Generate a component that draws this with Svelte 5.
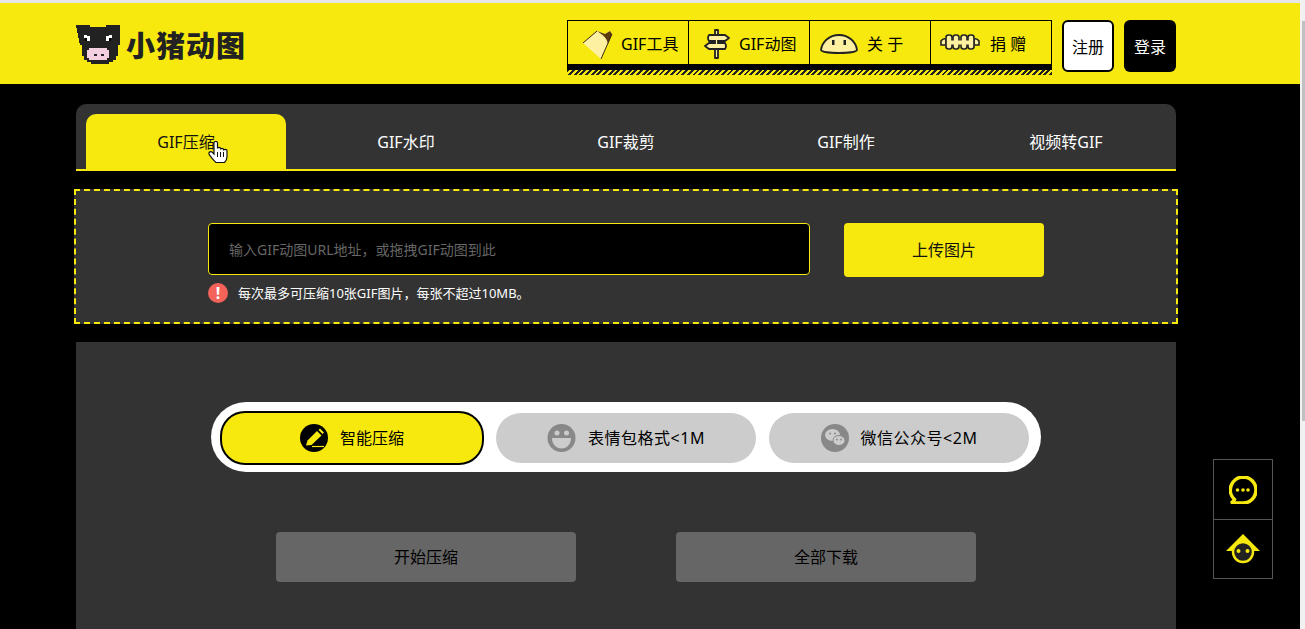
<script>
  const tabs = ['GIF压缩', 'GIF水印', 'GIF裁剪', 'GIF制作', '视频转GIF'];
</script>

<div class="window">
  <div class="page">
    <div class="topline"></div>
    <header>
      <div class="wrap head">
        <div class="logo">
          <svg width="44" height="42" viewBox="0 0 44 42" shape-rendering="crispEdges">
            <path fill="#222" d="M0 1h14v2h16v-2h14v20h-2v11h-2v4h-3v2h-4v2h-18v-2h-4v-2h-3v-4h-2v-11h-2z"/>
            <path fill="#fff" d="M8 11h3v1h3v5h-3v-2h-1v-1h-2zM36 11h-3v1h-3v5h3v-2h1v-1h2z"/>
            <path fill="#000" d="M9 14h2v3h-2zM33 14h2v3h-2z"/>
            <path fill="#f3cfe0" d="M13 24h18v2h2v8h-2v2h-18v-2h-2v-8h2z"/>
            <path fill="#222" d="M18 30h3v2h-3zM25 30h3v2h-3z"/>
          </svg>
          <span class="brand">小猪动图</span>
        </div>
        <div class="right">
          <nav>
            <div class="cells">
              <a class="cell c1" href="#a">
                <svg class="tall" width="32" height="30" viewBox="0 0 32 30"><path d="M2 14 16 2l8 3 5-3 2 3-11 25z" fill="#fdf0a0"/><path d="M16 2l8 3 5-3 2 3-4 10c-1-6-5-9-11-13z" fill="#5b3a12"/><path d="M2 14 16 2" stroke="#3a2a10" fill="none"/><path d="M31 5 20 30" stroke="#3a2a10" fill="none"/></svg>
                <span>GIF工具</span>
              </a>
              <a class="cell c2" href="#a">
                <svg class="tall" width="26" height="30" viewBox="0 0 26 30">
                  <g fill="#fdf0a0" stroke="#222" stroke-width="1.800" stroke-linejoin="round">
                    <path d="M11 1h3v28h-3z"/>
                    <path d="M5 6h16l4 3-4 3H5q-2-3 0-6z"/>
                    <path d="M21 14H5l-4 3 4 3h16q2-3 0-6z"/>
                  </g>
                  <path d="M11.900 11h1.200v5h-1.200z" fill="#fdf0a0"/>
                </svg>
                <span>GIF动图</span>
              </a>
              <a class="cell c3" href="#a">
                <svg class="blob" width="38" height="20" viewBox="0 0 38 20"><path d="M1 16C2 8 9 1 19 1s17 7 18 15c-1 4-35 4-36 0z" fill="#fdf0a0" stroke="#222" stroke-width="1.800"/><path d="M12 6h2.500v5H12zM23.500 6H26v5h-2.500z" fill="#222"/></svg>
                <span class="spaced">关 于</span>
              </a>
              <a class="cell c4" href="#a">
                <svg class="fence" width="40" height="16" viewBox="0 0 40 16">
                  <g stroke="#222" stroke-width="1.600" fill="#fdf0a0">
                    <path d="M1 7q2-3 5-2V11H1z"/>
                    <path d="M39 7q-2-3-5-2V11h5z"/>
                    <rect x="6" y="1" width="6" height="14" rx="2.500"/>
                    <rect x="13" y="1" width="6" height="14" rx="2.500"/>
                    <rect x="21" y="1" width="6" height="14" rx="2.500"/>
                    <rect x="28" y="1" width="6" height="14" rx="2.500"/>
                  </g>
                  <path d="M7 6.500h26v4H7z" fill="#fdf0a0"/>
                </svg>
                <span class="spaced">捐 赠</span>
              </a>
            </div>
            <div class="thick"></div>
            <div class="hatch"></div>
          </nav>
          <button class="auth reg">注册</button>
          <button class="auth login">登录</button>
        </div>
      </div>
    </header>

    <main class="wrap">
      <div class="tabs">
        {#each tabs as t, i}
          <div class="tab" class:active={i === 0}>{t}</div>
        {/each}
        <svg class="cursor" width="20" height="22" viewBox="0 0 20 22"><path d="M6 2c0-2 3.500-2 3.500 0v5.500c0-1.500 3-1.500 3 0v1c0-1.500 3-1.500 3 0v1c0-1.500 3.500-1.500 3.500 0v6c0 3-1.500 5-2.500 6H8c-1.500-1-6.500-7-7-8.500-.5-2 2-3 3-2l2 2z" fill="#fff" stroke="#111" stroke-width="1.200"/><path d="M9.500 11v5M12.500 11v5M15.500 11v5" stroke="#111" stroke-width="1"/></svg>
      </div>

      <section class="upload">
        <div class="row">
          <div class="input">输入GIF动图URL地址，或拖拽GIF动图到此</div>
          <button class="upbtn">上传图片</button>
        </div>
        <div class="note">
          <span class="warn">!</span>
          <span class="notetext">每次最多可压缩10张GIF图片，每张不超过10MB。</span>
        </div>
      </section>

      <section class="panel">
        <div class="pill">
          <div class="opt on">
            <svg width="28" height="28" viewBox="0 0 28 28"><circle cx="14" cy="14" r="14" fill="#000"/><path d="M6 21.500l1.500-5L17 7l4.500 4.500-10 9.500z" fill="#f7e90e"/><path d="M18.500 6l1.500-1.500 4 4L22.500 10z" fill="#f7e90e"/><path d="M12 22.500h12" stroke="#f7e90e" stroke-width="1.200"/></svg>
            <span>智能压缩</span>
          </div>
          <div class="opt">
            <svg width="29" height="28" viewBox="0 0 29 28"><circle cx="14.500" cy="14" r="14" fill="#888"/><circle cx="10" cy="9" r="2.500" fill="#ccc"/><circle cx="19.500" cy="9" r="2.500" fill="#ccc"/><path d="M5 14h19c0 6-4 10.500-9.500 10.500S5 20 5 14z" fill="#ccc"/></svg>
            <span class="wide">表情包格式&lt;1M</span>
          </div>
          <div class="opt">
            <svg width="28" height="28" viewBox="0 0 28 28"><circle cx="14" cy="14" r="14" fill="#888"/><ellipse cx="11.500" cy="11" rx="7.500" ry="6" fill="#ccc"/><ellipse cx="18" cy="16.500" rx="6" ry="5" fill="#ccc" stroke="#888"/><circle cx="9" cy="9.500" r="1" fill="#888"/><circle cx="14" cy="9.500" r="1" fill="#888"/><circle cx="16" cy="15.500" r=".9" fill="#888"/><circle cx="20" cy="15.500" r=".9" fill="#888"/></svg>
            <span class="wide">微信公众号&lt;2M</span>
          </div>
        </div>
        <div class="actions">
          <button class="act">开始压缩</button>
          <button class="act">全部下载</button>
        </div>
      </section>
    </main>

    <aside class="side">
      <div class="sidebtn">
        <svg width="28" height="28" viewBox="0 0 28 28"><path d="M14 1a13 13 0 1 1 0 26H2c2-1 3-2 3.500-3.500A13 13 0 0 1 14 1z" fill="none" stroke="#f7e90e" stroke-width="3.600"/><circle cx="8.500" cy="14" r="1.800" fill="#f7e90e"/><circle cx="14" cy="14" r="1.800" fill="#f7e90e"/><circle cx="19" cy="14" r="1.800" fill="#f7e90e"/></svg>
      </div>
      <div class="sidebtn second">
        <svg width="34" height="30" viewBox="0 0 34 30"><path d="M17 0 34 17H0z" fill="#f7e90e"/><circle cx="17" cy="18" r="10" fill="#222" stroke="#f7e90e" stroke-width="2.400"/><circle cx="12.500" cy="17" r="2" fill="#f7e90e"/><circle cx="21.500" cy="17" r="2" fill="#f7e90e"/></svg>
      </div>
    </aside>
  </div>
  <div class="scrollbar"><div class="thumb"></div></div>
</div>

<style>
  :global(body) { margin: 0; background: #000; }
  .window {
    display: flex; width: 1305px; height: 629px; overflow: hidden;
    font-family: "Noto Sans", "Noto Sans CJK SC", sans-serif; font-size: 16px; color: #fff;
  }
  .page { position: relative; width: 1300px; background: #000; overflow: hidden; }
  .topline { height: 3px; background: #e6e6e6; }
  .scrollbar { width: 5px; background: #f1f1f1; display: flex; justify-content: flex-end; padding-top: 21px; box-sizing: border-box; }
  .thumb { width: 3px; height: 400px; background: #c1c1c1; }
  .wrap { width: 1100px; margin-left: 76px; }
  header { height: 81px; background: #f7e90e; }
  .head { display: flex; justify-content: space-between; }
  .logo { display: flex; align-items: center; gap: 6px; height: 81px; }
  .logo svg { margin-top: 2px; }
  .brand { font-family: "Noto Sans CJK SC", sans-serif; font-weight: 900; font-size: 29px; color: #222; letter-spacing: 1px; }
  .right { display: flex; gap: 10px; padding-top: 17px; align-items: flex-start; }
  nav { width: 485px; }
  .cells { display: flex; height: 43px; border: 1px solid #000; border-bottom: 0; }
  .cell { flex: none; width: 121px; box-sizing: border-box; display: flex; align-items: center; gap: 9px; border-left: 1px solid #000; color: #000; text-decoration: none; font-size: 16px; white-space: nowrap; }
  .c1 { width: 120px; border-left: 0; padding-left: 13px; gap: 8px; }
  .c2 { padding-left: 15px; }
  .c3 { padding-left: 10px; }
  .c4 { padding-left: 9px; gap: 10px; }
  .tall { margin-top: 2px; }
  .blob { margin-top: 2px; }
  .fence { margin-top: -2px; }
  .thick { height: 6px; background: #000; }
  .hatch { height: 5px; background: repeating-linear-gradient(135deg, #222 0 2px, #f7e90e 2px 4px); }
  .auth { width: 52px; height: 52px; border-radius: 6px; font: inherit; font-size: 16px; padding: 0; }
  .reg { background: #fff; color: #000; border: 2px solid #000; }
  .login { background: #000; color: #fff; border: 0; }

  main { padding-top: 20px; }
  .tabs { position: relative; display: flex; gap: 20px; padding: 10px 10px 0; box-sizing: border-box; background: #333; border-radius: 10px 10px 0 0; border-bottom: 2px solid #f7e90e; height: 67px; }
  .tab { width: 200px; height: 55px; line-height: 56px; text-align: center; font-size: 16px; color: #fff; }
  .tab.active { background: #f7e90e; color: #111; border-radius: 10px 10px 0 0; }
  .cursor { position: absolute; left: 132px; top: 37px; }
  .upload { margin: 18px -2px 0 -2px; height: 135px; box-sizing: border-box; border: 2px dashed #f7e90e; background: #333; padding: 32px 0 0 132px; }
  .row { display: flex; gap: 34px; align-items: flex-start; }
  .input { width: 602px; height: 52px; box-sizing: border-box; background: #000; border: 1px solid #f7e90e; border-radius: 4px; padding-left: 20px; line-height: 51px; font-size: 14px; color: #666; }
  .upbtn { width: 200px; height: 54px; border: 0; border-radius: 4px; background: #f7e90e; color: #111; font: inherit; font-size: 16px; padding: 0 0 2px; }
  .note { display: flex; align-items: center; gap: 10px; margin-top: 6px; font-size: 13px; }
  .notetext { margin-top: -2px; }
  .warn { width: 20px; height: 20px; border-radius: 50%; background: #f4635a; color: #fff; font-weight: 700; font-size: 16px; line-height: 20px; text-align: center; }
  .panel { margin-top: 18px; height: 287px; background: #333; padding-top: 60px; box-sizing: border-box; }
  .pill { display: flex; align-items: center; margin-left: 135px; width: 830px; height: 70px; box-sizing: border-box; padding: 2px 0 0 9px; background: #fff; border-radius: 35px; gap: 13px; }
  .opt { width: 260px; height: 50px; border-radius: 25px; background: #ccc; color: #000; display: flex; align-items: center; justify-content: center; gap: 12px; font-size: 16px; }
  .opt span { margin-top: -2px; }
  .opt.on { width: 264px; height: 54px; box-sizing: border-box; border: 2px solid #000; background: #f7e90e; margin-right: -1px; }
  .wide { letter-spacing: .5px; }
  .actions { display: flex; gap: 100px; margin: 60px 0 0 200px; }
  .act { width: 300px; height: 50px; border: 0; border-radius: 4px; background: #666; color: #000; font: inherit; font-size: 16px; padding: 0 0 2px; }
  .side { position: absolute; left: 1213px; top: 459px; width: 60px; height: 120px; box-sizing: border-box; border: 1px solid #555; background: #000; }
  .sidebtn { height: 59px; display: flex; align-items: center; justify-content: center; }
  .second { height: 59px; border-top: 1px solid #555; box-sizing: border-box; }
</style>
